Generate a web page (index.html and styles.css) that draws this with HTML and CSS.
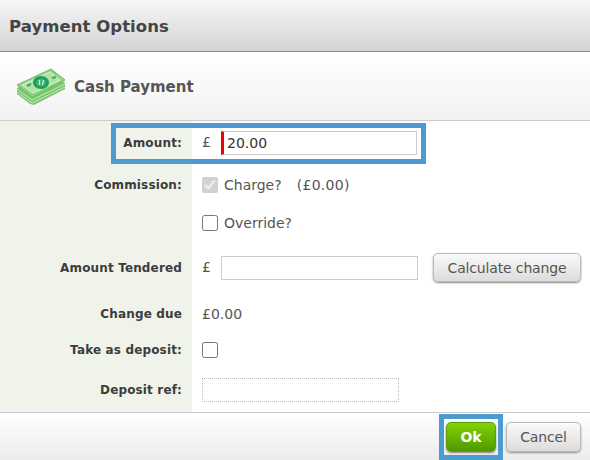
FILE: index.html
```html
<!DOCTYPE html>
<html lang="en">

<head>
  <meta charset="UTF-8">
  <title>Payment Options</title>
  <link rel="stylesheet" href="styles.css">
</head>

<body>
  <div class="dialog">
    <h1 class="dialog-title">Payment Options</h1>

    <div class="method">
      <svg class="cash-icon" width="54" height="42" viewBox="0 0 54 42">
        <path d="M2 23 L36 6 L50 18 L50 24 L19 40 L15 39 L2 29 Z" fill="#7cc66f" />
        <path d="M2 27 L17 38 L50 22 M2 24 L17 35 L50 19" fill="none" stroke="#c4e8ba" stroke-width="1" />
        <path d="M2 20 L36 4 L50 15 L17 32 Z" fill="#8ed484" stroke="#6dbb60" stroke-width="1" />
        <path d="M7 20 L35 7 L45 15 L18 28 Z" fill="#aee3a3" stroke="#d8f3d1" stroke-width="1" />
        <ellipse cx="26" cy="17.500" rx="8" ry="6.500" fill="#1f9a5c" />
        <ellipse cx="26" cy="17.500" rx="5" ry="4" fill="#3db67a" />
        <path d="M24.500 20 L24.500 15 M27.500 20 L28.500 15" stroke="#d8f3d1" stroke-width="1.200" />
        <path d="M12 21 L16 19 M37 13 L41 12" stroke="#4aa35a" stroke-width="2" />
      </svg>
      <span class="method-name">Cash Payment</span>
    </div>

    <form class="fields">
      <div class="row row-amount">
        <label class="row-label">Amount:</label>
        <div class="row-value">
          <span class="currency">£</span>
          <input type="text" class="text-input required" value="20.00">
        </div>
      </div>

      <div class="row row-commission">
        <label class="row-label">Commission:</label>
        <div class="row-value">
          <input type="checkbox" class="check" checked disabled>
          <span class="check-text">Charge?</span>
          <span class="charge-amount">(£0.00)</span>
        </div>
      </div>

      <div class="row row-override">
        <label class="row-label"></label>
        <div class="row-value">
          <input type="checkbox" class="check">
          <span class="check-text">Override?</span>
        </div>
      </div>

      <div class="row row-tendered">
        <label class="row-label">Amount Tendered</label>
        <div class="row-value">
          <span class="currency">£</span>
          <input type="text" class="text-input">
          <button type="button" class="btn btn-calc">Calculate change</button>
        </div>
      </div>

      <div class="row row-change">
        <label class="row-label">Change due</label>
        <div class="row-value">£0.00</div>
      </div>

      <div class="row row-deposit">
        <label class="row-label">Take as deposit:</label>
        <div class="row-value">
          <input type="checkbox" class="check">
        </div>
      </div>

      <div class="row row-ref">
        <label class="row-label">Deposit ref:</label>
        <div class="row-value">
          <input type="text" class="ref-input" disabled>
        </div>
      </div>
    </form>

    <div class="dialog-footer">
      <button type="button" class="btn btn-ok">Ok</button>
      <button type="button" class="btn btn-cancel">Cancel</button>
    </div>

    <div class="highlight highlight-amount"></div>
    <div class="highlight highlight-ok"></div>
  </div>
</body>

</html>
```

FILE: styles.css
```css
* {
  box-sizing: border-box;
}

body {
  margin: 0;
  font-family: "DejaVu Sans", Verdana, sans-serif;
  font-size: 14px;
  color: #555;
}

.dialog {
  position: relative;
  width: 590px;
  height: 460px;
  overflow: hidden;
  background: #fff;
}

.dialog-title {
  margin: 0;
  height: 52px;
  padding: 0 0 0 9px;
  font-size: 16.500px;
  letter-spacing: 0.050px;
  line-height: 53px;
  font-weight: bold;
  color: #444;
  background: linear-gradient(#f6f6f6, #d4d4d4);
  border-bottom: 1px solid #8c8c8c;
}

.method {
  display: flex;
  align-items: center;
  gap: 5px;
  height: 69px;
  padding-left: 15px;
  font-size: 15px;
  font-weight: bold;
  background: linear-gradient(#fff, #f2f2f2);
  border-bottom: 1px solid #ccc;
}

.method-name {
  padding-top: 2px;
}

.cash-icon {
  flex: none;
}

.fields {
  height: 291px;
  background: linear-gradient(to right, #f0f3ea 192px, #fff 192px);
}

.row {
  display: flex;
  align-items: center;
}

.row-label {
  flex: none;
  width: 182px;
  margin-right: 20px;
  font-size: 12px;
  letter-spacing: 0.150px;
  font-weight: bold;
  text-align: right;
  color: #3c3c3c;
}

.row-value {
  display: flex;
  align-items: center;
}

.row-amount {
  height: 44px;
}

.row-commission {
  height: 40px;
}

.row-override {
  height: 36px;
}

.row-tendered {
  height: 54px;
}

.row-change {
  height: 38px;
}

.row-deposit {
  height: 34px;
}

.row-ref {
  height: 45px;
}

.currency {
  width: 19px;
  margin-top: -2px;
}

.text-input {
  width: 197px;
  height: 24px;
  padding: 0 3px;
  border: 1px solid #ccc;
  font: inherit;
  color: #333;
  outline: none;
}

.row-amount .text-input {
  width: 196px;
}

.required {
  border-left: 3px solid #f00000;
}

.check {
  width: 16px;
  height: 16px;
  margin: 0 6px 0 0;
}

.check-text {
  margin-right: 15px;
}

.charge-amount {
  letter-spacing: 0.300px;
}

.btn {
  font-family: inherit;
  font-size: 14px;
  letter-spacing: -0.150px;
  color: #555;
  border: 1px solid #bbb;
  border-radius: 5px;
  background: linear-gradient(#fafafa, #dcdcdc);
  box-shadow: 0 1px 2px #888;
}

.btn-calc {
  width: 148px;
  height: 29px;
  margin-left: 15px;
  margin-top: -1px;
}

.ref-input {
  width: 197px;
  height: 24px;
  background: #fff;
  border: 1px dotted #bbb;
}

.dialog-footer {
  display: flex;
  justify-content: flex-end;
  gap: 10px;
  height: 48px;
  padding: 9px 9px 0 0;
  background: linear-gradient(#fff, #ececec);
  border-top: 1px solid #ccc;
}

.btn-ok {
  width: 50px;
  height: 30px;
  font-weight: bold;
  color: #fff;
  border-color: #5c9a10;
  background: linear-gradient(#7fd400, #4f9a00);
}

.btn-cancel {
  width: 75px;
  height: 30px;
}

/* blue marks drawn on top of the screenshot */
.highlight {
  position: absolute;
  border: 5px solid #4a9bcf;
}

.highlight-amount {
  left: 111px;
  top: 123px;
  width: 315px;
  height: 41px;
}

.highlight-ok {
  left: 439px;
  top: 414px;
  width: 64px;
  height: 46px;
}
```
